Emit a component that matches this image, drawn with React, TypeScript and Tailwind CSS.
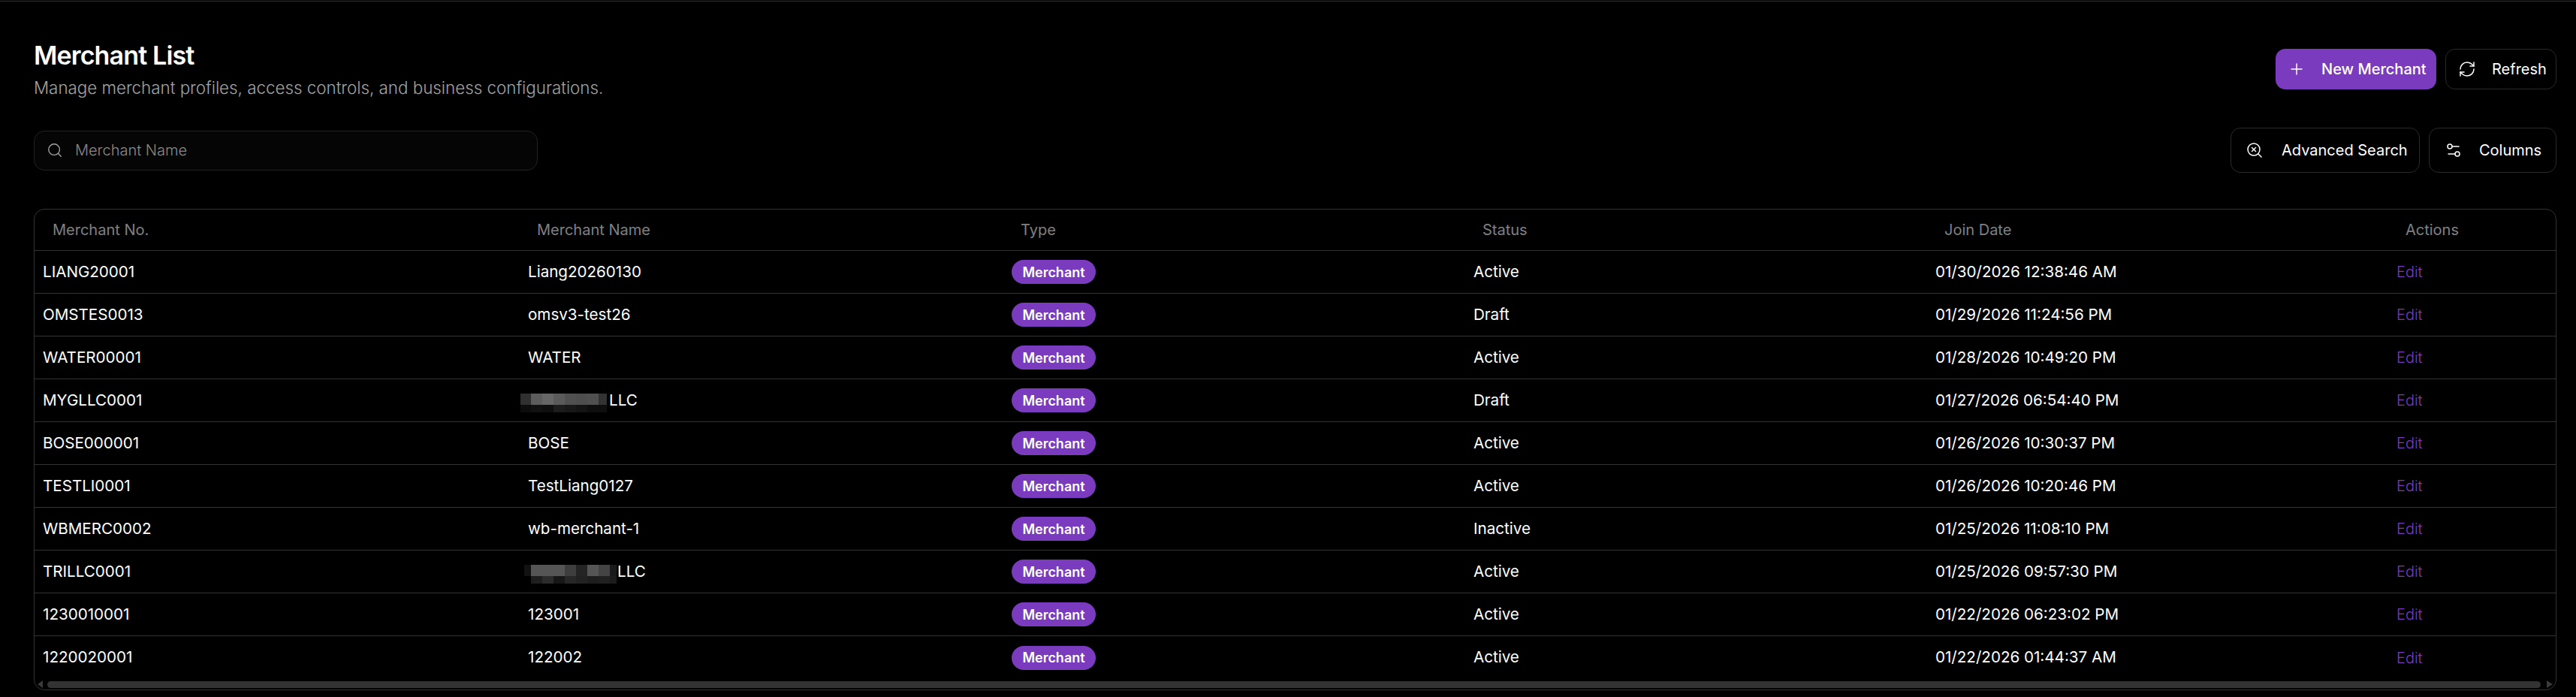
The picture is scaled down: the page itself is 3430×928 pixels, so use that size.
import { Plus, RefreshCw, Search, SearchX, Settings2 } from "lucide-react";

const FONT = "font-['Inter','Liberation_Sans',sans-serif]";
const GRID = "grid grid-cols-[645px_644px_615px_615px_614px_1fr]";

type Mosaic = { widths: number[]; top: string[]; bottom: string[] };

type Merchant = {
  no: string;
  name: string;
  status: string;
  date: string;
  mosaic?: Mosaic;
  mosaicClass?: string;
};

const mosaicA: Mosaic = {
  widths: [14, 15, 15, 15, 15, 15, 15, 11],
  top: ["#303030", "#5c5c5c", "#666666", "#5a5a5a", "#505050", "#4e4e4e", "#505050", "#333333"],
  bottom: ["#0c0c0c", "#111111", "#0e0e0e", "#1c1c1c", "#181818", "#141414", "#0e0e0e", "#0e0e0e"],
};

const mosaicB: Mosaic = {
  widths: [9, 15, 15, 15, 15, 15, 15, 15, 9],
  top: ["#111111", "#555555", "#555555", "#555555", "#3e3e3e", "#242424", "#555555", "#444444", "#1a1a1a"],
  bottom: ["#000000", "#1e1e1e", "#2c2c2c", "#171717", "#272727", "#222222", "#1e1e1e", "#202020", "#1c1c1c"],
};

const merchants: Merchant[] = [
  { no: "LIANG20001", name: "Liang20260130", status: "Active", date: "01/30/2026 12:38:46 AM" },
  { no: "OMSTES0013", name: "omsv3-test26", status: "Draft", date: "01/29/2026 11:24:56 PM" },
  { no: "WATER00001", name: "WATER", status: "Active", date: "01/28/2026 10:49:20 PM" },
  { no: "MYGLLC0001", name: "LLC", status: "Draft", date: "01/27/2026 06:54:40 PM", mosaic: mosaicA, mosaicClass: "-ml-[10px] mr-[3px]" },
  { no: "BOSE000001", name: "BOSE", status: "Active", date: "01/26/2026 10:30:37 PM" },
  { no: "TESTLI0001", name: "TestLiang0127", status: "Active", date: "01/26/2026 10:20:46 PM" },
  { no: "WBMERC0002", name: "wb-merchant-1", status: "Inactive", date: "01/25/2026 11:08:10 PM" },
  { no: "TRILLC0001", name: "LLC", status: "Active", date: "01/25/2026 09:57:30 PM", mosaic: mosaicB, mosaicClass: "-ml-[5px] mr-px" },
  { no: "1230010001", name: "123001", status: "Active", date: "01/22/2026 06:23:02 PM" },
  { no: "1220020001", name: "122002", status: "Active", date: "01/22/2026 01:44:37 AM" },
];

const columns = ["Merchant No.", "Merchant Name", "Type", "Status", "Join Date", "Actions"];

// pixelated block hiding part of a merchant name
function Pixelated({ mosaic, className }: { mosaic: Mosaic; className?: string }) {
  const total = mosaic.widths.reduce((a, b) => a + b, 0);
  let x = 0;
  return (
    <svg width={total} height={25} viewBox={`0 0 ${total} 25`} className={`mt-[7px] shrink-0 ${className ?? ""}`}>
      {mosaic.widths.map((w, i) => {
        const left = x;
        x += w;
        return (
          <g key={i}>
            <rect x={left} y={0} width={w} height={15} fill={mosaic.top[i]} />
            <rect x={left} y={15} width={w} height={10} fill={mosaic.bottom[i]} />
          </g>
        );
      })}
    </svg>
  );
}

function OutlineButton({ icon, label, className }: { icon: React.ReactNode; label: string; className: string }) {
  return (
    <button type="button" className={`flex items-center rounded-[13px] border border-[#2a2a2a] bg-black text-[20px] font-normal text-white ${className}`}>
      {icon}
      {label}
    </button>
  );
}

export default function App() {
  return (
    <div className={`h-[928px] w-full overflow-hidden bg-black pt-px ${FONT}`}>
      <div className="h-px bg-[#333333]" />
      <div className="pl-[45px] pr-[26px]">
        <div className="flex h-[168px] items-start justify-between">
          <div className="pt-[52px]">
            <h1 className="text-[34px] leading-[40px] font-semibold tracking-[-0.85px] text-white">Merchant List</h1>
            <p className="mt-[7px] text-[22.35px] leading-[32px] font-light text-[#a3a3a3]">
              Manage merchant profiles, access controls, and business configurations.
            </p>
          </div>
          <div className="mt-[63px] flex gap-3">
            <button type="button" className="flex h-[54px] w-[214px] items-center rounded-[13px] bg-[#7a3bbf] pl-4 text-[20px] font-medium text-white">
              <Plus className="mr-[21px] h-6 w-6" strokeWidth={1.5} />
              New Merchant
            </button>
            <OutlineButton
              icon={<RefreshCw className="mr-[21px] h-6 w-6" strokeWidth={1.5} />}
              label="Refresh"
              className="h-[54px] w-[148px] pl-4"
            />
          </div>
        </div>

        <div className="flex items-center justify-between">
          <div className="flex h-[53px] w-[671px] items-center rounded-[14px] border border-[#222222] bg-[#050505] pl-[16px]">
            <Search className="h-[22px] w-[22px] text-[#a3a3a3]" strokeWidth={1.5} />
            <span className="ml-[16px] text-[20px] font-light text-[#8a8a8a]">Merchant Name</span>
          </div>
          <div className="flex gap-3">
            <OutlineButton
              icon={<SearchX className="mr-[24px] h-[24px] w-[24px]" strokeWidth={1.5} />}
              label="Advanced Search"
              className="h-[60px] w-[252px] pl-[19px]"
            />
            <OutlineButton
              icon={<Settings2 className="mr-[22px] h-[24px] w-[24px]" strokeWidth={1.5} />}
              label="Columns"
              className="h-[60px] w-[170px] pl-[20px]"
            />
          </div>
        </div>

        <div className="mt-[48px] overflow-hidden rounded-[14px] border border-[#333333]">
          <div className={`${GRID} h-[55px] items-center border-b border-[#333333] text-[20px] text-[#808080]`}>
            {columns.map((c) => (
              <div key={c} className="pl-[24px]">
                {c}
              </div>
            ))}
          </div>
          {merchants.map((m, i) => (
            <div
              key={m.no}
              className={`${GRID} h-[57px] items-center text-[20.6px] text-white ${i < merchants.length - 1 ? "border-b border-[#333333]" : ""}`}
            >
              <div className="pl-[11px]">{m.no}</div>
              <div className="flex items-center pl-[12px]">
                {m.mosaic && <Pixelated mosaic={m.mosaic} className={m.mosaicClass} />}
                {m.name}
              </div>
              <div className="pl-[12px]">
                <span className="inline-flex h-[32px] w-[112px] items-center justify-center rounded-full bg-[#7a3bbf] text-[18px] font-semibold">
                  Merchant
                </span>
              </div>
              <div className="pl-[12px]">{m.status}</div>
              <div className="pl-[12px]">{m.date}</div>
              <div className="pl-[12px] text-[20px] font-light text-[#7a3bbf]">Edit</div>
            </div>
          ))}
          <div className="flex h-[14px] items-center pl-1 pr-1">
            <svg width="7" height="10" viewBox="0 0 7 10" className="shrink-0">
              <path d="M7 0L0 5l7 5z" fill="#3a3a3a" />
            </svg>
            <div className="ml-[6px] mr-[8px] h-[9px] flex-1 rounded-full bg-[#333333]" />
            <svg width="8" height="10" viewBox="0 0 8 10" className="shrink-0">
              <path d="M0 0l8 5-8 5z" fill="#3a3a3a" />
            </svg>
          </div>
        </div>
      </div>
    </div>
  );
}
